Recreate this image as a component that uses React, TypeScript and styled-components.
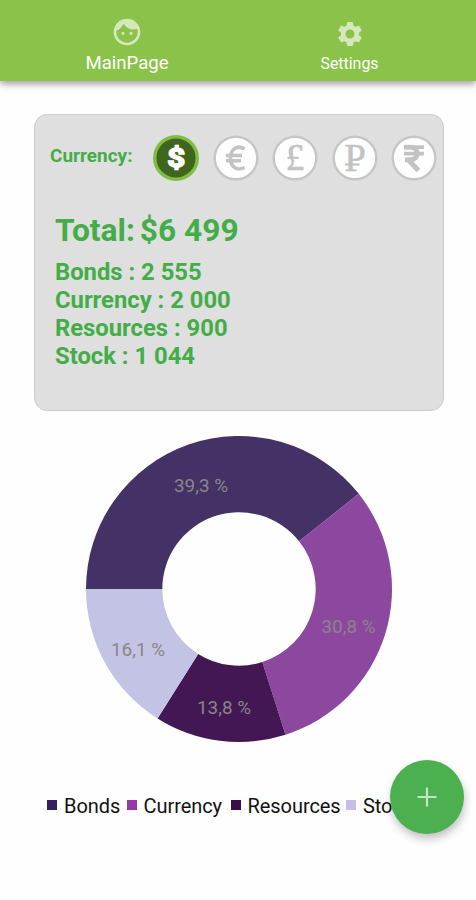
import React from "react";
import styled, { createGlobalStyle } from "styled-components";
import { MdFace, MdSettings } from "react-icons/md";

const GlobalStyle = createGlobalStyle`
  * { box-sizing: border-box; }
  body { margin: 0; background: #fefefe; font-family: Roboto, "Liberation Sans", sans-serif; }
`;

const Page = styled.div`
  display: flex;
  flex-direction: column;
  width: 476px;
  height: 900px;
  overflow: hidden;
  position: relative;
  background: #fefefe;
`;

const TabBar = styled.nav`
  display: grid;
  grid-template-columns: 254px 191px;
  height: 81px;
  flex: none;
  background: #8bc34a;
  box-shadow: 0 3px 7px rgba(0, 0, 0, 0.38);
`;

const Tab = styled.div<{ $active?: boolean }>`
  display: flex;
  flex-direction: column;
  align-items: center;
  padding-top: ${(p) => (p.$active ? 16 : 19)}px;
  color: #fff;
  font-size: ${(p) => (p.$active ? 18.6 : 15.9)}px;
  line-height: 22px;
  svg { flex: none; color: #d4e8bc; }
`;

const TabLabel = styled.span`
  margin-top: 4px;
`;

const Card = styled.section`
  width: 410px;
  height: 297px;
  margin: 33px 0 0 34px;
  flex: none;
  border: 1px solid #cdcdcd;
  border-radius: 13px;
  background: #dfdfdf;
  color: #43ad48;
  font-weight: 700;
`;

const CurrencyRow = styled.div`
  display: flex;
  align-items: center;
  height: 46px;
  margin-top: 20px;
  padding-left: 15px;
`;

const CurrencyLabel = styled.span`
  width: 103px;
  font-size: 18.9px;
  letter-spacing: 0.05px;
  line-height: 22px;
  padding-bottom: 5px;
`;

const Coins = styled.div`
  display: flex;
  gap: 13.5px;
`;

const Coin = styled.svg`
  display: block;
  flex: none;
  width: 46px;
  height: 46px;
`;

const Summary = styled.div`
  display: flex;
  flex-direction: column;
  padding: 31px 0 0 20px;
`;

const Total = styled.div`
  display: flex;
  gap: 5px;
  font-size: 31.7px;
  line-height: 37px;
  margin-bottom: 10px;
`;

const Line = styled.div`
  font-size: 23.8px;
  line-height: 27.9px;
`;

const Chart = styled.svg`
  display: block;
  flex: none;
  width: 308px;
  height: 308px;
  margin: 24px 0 0 84.5px;
`;

const ChartLabel = styled.text`
  fill: #8a8588;
  font-size: 18.9px;
  text-anchor: middle;
`;

const Legend = styled.div`
  display: flex;
  flex: none;
  margin: 51px 0 0 47px;
  line-height: 24px;
  font-size: 20px;
  letter-spacing: -0.06px;
  color: #111;
`;

const LegendItem = styled.div<{ $width: number }>`
  display: flex;
  flex: none;
  width: ${(p) => p.$width}px;
  gap: 7px;
`;

const Swatch = styled.i<{ $color: string }>`
  width: 10px;
  height: 10px;
  margin-top: 6px;
  background: ${(p) => p.$color};
`;

const AddButton = styled.button`
  position: absolute;
  right: 12.5px;
  bottom: 66px;
  display: grid;
  place-items: center;
  width: 74px;
  height: 74px;
  padding: 0;
  border: 0;
  border-radius: 50%;
  background: #4caf50;
  box-shadow: 1px 5px 8px rgba(0, 0, 0, 0.24);
`;

const slices = [
  { name: "Bonds", value: 2555, color: "#443266", swatch: "#32205f", label: "39,3 %", x: 116, y: 57, width: 79.5 },
  { name: "Currency", value: 2000, color: "#8c489f", swatch: "#963ba5", label: "30,8 %", x: 263.5, y: 198, width: 104 },
  { name: "Resources", value: 900, color: "#421753", swatch: "#371045", label: "13,8 %", x: 139, y: 279, width: 115.5 },
  { name: "Stock", value: 1044, color: "#c3c3e5", swatch: "#c3c0e4", label: "16,1 %", x: 53, y: 221, width: 90 },
];

const sum = slices.reduce((a, s) => a + s.value, 0);

function point(radius: number, fraction: number) {
  const a = Math.PI + fraction * 2 * Math.PI;
  return `${154 + radius * Math.cos(a)} ${154 + radius * Math.sin(a)}`;
}

function ring(from: number, to: number) {
  return `M${point(153, from)}A153 153 0 0 1 ${point(153, to)}L${point(76.7, to)}A76.7 76.7 0 0 0 ${point(76.7, from)}Z`;
}

function Donut() {
  let start = 0;
  return (
    <Chart viewBox="0 0 308 308">
      {slices.map((s) => {
        const from = start;
        start += s.value / sum;
        return <path key={s.name} d={ring(from, start)} fill={s.color} />;
      })}
      {slices.map((s) => (
        <ChartLabel key={s.name} x={s.x} y={s.y}>{s.label}</ChartLabel>
      ))}
    </Chart>
  );
}

const Sign = styled.text<{ $size: number; $serif?: boolean; $color?: string; $stroke?: number }>`
  fill: ${(p) => p.$color ?? "#c3c3c3"};
  stroke: ${(p) => p.$color ?? "#c3c3c3"};
  stroke-width: ${(p) => p.$stroke ?? 0}px;
  font-family: ${(p) => (p.$serif ? '"Liberation Serif", serif' : 'Roboto, sans-serif')};
  font-size: ${(p) => p.$size}px;
  font-weight: ${(p) => (p.$serif ? 400 : 700)};
  text-anchor: middle;
`;

function CoinFace({ children }: { children: React.ReactNode }) {
  return (
    <Coin viewBox="0 0 46 46">
      <circle cx="23" cy="23" r="21.3" fill="#fefefe" stroke="#c6c6c6" strokeWidth="2.4" />
      {children}
    </Coin>
  );
}

export default function App() {
  return (
    <Page>
      <GlobalStyle />
      <TabBar>
        <Tab $active>
          <MdFace size={32} />
          <TabLabel>MainPage</TabLabel>
        </Tab>
        <Tab>
          <MdSettings size={30} />
          <TabLabel>Settings</TabLabel>
        </Tab>
      </TabBar>
      <Card>
        <CurrencyRow>
          <CurrencyLabel>Currency:</CurrencyLabel>
          <Coins>
            <Coin viewBox="0 0 46 46">
              <circle cx="23" cy="23" r="21.3" fill="#3f661d" stroke="#82bd43" strokeWidth="3.4" />
              <Sign transform="translate(23.2 32.3) scale(1.2 1)" $size={26} $stroke={1.6} $color="#fff">$</Sign>
            </Coin>
            <CoinFace>
              <path d="M31.5 14C24 9.5 17.5 14 17.5 23S24 36.5 31.5 32.5M13 20.5h16M13 25.7h15" fill="none" stroke="#c3c3c3" strokeWidth="3.6" />
            </CoinFace>
            <CoinFace><Sign x="23" y="35" $size={37} $serif $stroke={0.7}>£</Sign></CoinFace>
            <CoinFace>
              <Sign x="23" y="35.5" $size={39} $serif $stroke={0.5}>P</Sign>
              <path d="M13 29.5h14.5" stroke="#c3c3c3" strokeWidth="2.2" />
            </CoinFace>
            <CoinFace>
              <path d="M13 12.2h20M13 18.6h20" stroke="#c3c3c3" strokeWidth="3.8" />
              <path d="M13.5 12.2h6c9 0 9 12.5 0 12.5h-5.5M16.5 24l11 11.5" fill="none" stroke="#c3c3c3" strokeWidth="5" />
            </CoinFace>
          </Coins>
        </CurrencyRow>
        <Summary>
          <Total><span>Total:</span><span>$6 499</span></Total>
          <Line>Bonds : 2 555</Line>
          <Line>Currency : 2 000</Line>
          <Line>Resources : 900</Line>
          <Line>Stock : 1 044</Line>
        </Summary>
      </Card>
      <Donut />
      <Legend>
        {slices.map((s) => (
          <LegendItem key={s.name} $width={s.width}>
            <Swatch $color={s.swatch} />
            <span>{s.name}</span>
          </LegendItem>
        ))}
      </Legend>
      <AddButton aria-label="Add">
        <svg width="20" height="20" viewBox="0 0 20 20">
          <path d="M10 .5v19M.5 10h19" stroke="#c5e6c6" strokeWidth="2.2" />
        </svg>
      </AddButton>
    </Page>
  );
}
